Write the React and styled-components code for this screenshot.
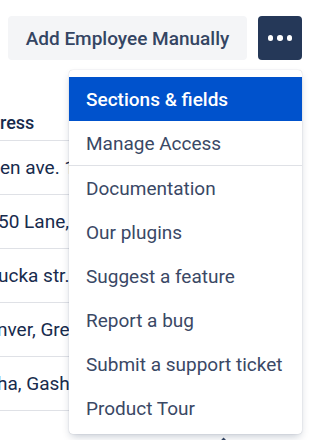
import React from 'react'
import styled, { createGlobalStyle } from 'styled-components'

const GlobalStyle = createGlobalStyle`
  html, body {
    margin: 0;
    padding: 0;
    background: #ffffff;
  }
  body {
    font-family: Roboto, 'Noto Sans', sans-serif;
  }
`

// the table is scrolled sideways, so only the tail of each address shows
const rows = [
  { text: 'en ave. 1', shift: 0 },
  { text: '50 Lane, Ha', shift: -2 },
  { text: 'ucka str. 9', shift: -2 },
  { text: 'nver, Green', shift: -3 },
  { text: 'ha, Gash', shift: -3 },
]

const menuItems = [
  { label: 'Sections & fields', active: true },
  { label: 'Manage Access', divider: true },
  { label: 'Documentation' },
  { label: 'Our plugins' },
  { label: 'Suggest a feature' },
  { label: 'Report a bug' },
  { label: 'Submit a support ticket' },
  { label: 'Product Tour' },
]

const App = () => {
  return (
    <Page>
      <GlobalStyle />
      <Toolbar>
        <AddButton>Add Employee Manually</AddButton>
        <MoreButton aria-label="More">
          <Dot />
          <Dot />
          <Dot />
        </MoreButton>
      </Toolbar>

      <Table>
        <HeaderRow>
          <Cell shift={0}>ress</Cell>
        </HeaderRow>
        {rows.map((r) => (
          <Row key={r.text}>
            <Cell shift={r.shift}>{r.text}</Cell>
          </Row>
        ))}
      </Table>

      <Footer>
        <svg width="16" height="10" viewBox="0 0 16 10">
          <path d="M3 13 L13 3" stroke="#344563" strokeWidth="4" fill="none" />
        </svg>
      </Footer>

      <Menu>
        {menuItems.map((m) => (
          <MenuItem key={m.label} active={m.active} divider={m.divider}>
            {m.label}
          </MenuItem>
        ))}
      </Menu>
    </Page>
  )
}

const Page = styled.div`
  position: relative;
  width: 314px;
  height: 440px;
  overflow: hidden;
  background: #fff;
`

const Toolbar = styled.div`
  display: flex;
  gap: 11px;
  padding: 16px 0 0 8px;
`

const AddButton = styled.button`
  width: 239px;
  height: 44px;
  border: none;
  border-radius: 4px;
  background: #f4f5f7;
  color: #344563;
  font-family: Roboto, sans-serif;
  font-weight: 500;
  font-size: 19px;
  padding: 0;
  cursor: pointer;
`

const MoreButton = styled.button`
  width: 44px;
  height: 44px;
  border: none;
  border-radius: 4px;
  background: #253858;
  display: flex;
  align-items: center;
  justify-content: center;
  gap: 4px;
  padding: 0;
  cursor: pointer;
`

const Dot = styled.span`
  width: 5.5px;
  height: 5.5px;
  border-radius: 50%;
  background: #fff;
`

const Table = styled.div`
  margin-top: 45px;
  width: 250px;
  overflow: hidden;
`

const HeaderRow = styled.div`
  height: 35px;
  display: flex;
  align-items: center;
  border-bottom: 1px solid #dfe1e6;
  font-size: 18px;
  font-weight: 500;
  color: #172b4d;
`

const Row = styled.div`
  height: 53px;
  display: flex;
  align-items: center;
  border-bottom: 1px solid #dfe1e6;
  font-size: 19px;
  color: #172b4d;
`

const Cell = styled.span`
  white-space: nowrap;
  margin-left: ${(p) => p.shift}px;
`

const Footer = styled.div`
  display: flex;
  padding: 25px 0 0 212px;
  svg {
    display: block;
  }
`

const Menu = styled.div`
  position: absolute;
  top: 70px;
  left: 69px;
  width: 233px;
  padding: 7px 0 4px;
  background: #fff;
  border-radius: 4px;
  box-shadow: 0 4px 8px -2px rgba(9, 30, 66, 0.25), 0 0 1px rgba(9, 30, 66, 0.31);
`

const MenuItem = styled.div`
  height: 44px;
  display: flex;
  align-items: center;
  padding: 0 17px;
  font-size: 19px;
  font-weight: ${(p) => (p.active ? 500 : 400)};
  color: ${(p) => (p.active ? '#fff' : '#3a4865')};
  background: ${(p) => (p.active ? '#0052cc' : 'transparent')};
  border-bottom: ${(p) => (p.divider ? '1px solid #dfe1e6' : 'none')};
  white-space: nowrap;
`

export default App
